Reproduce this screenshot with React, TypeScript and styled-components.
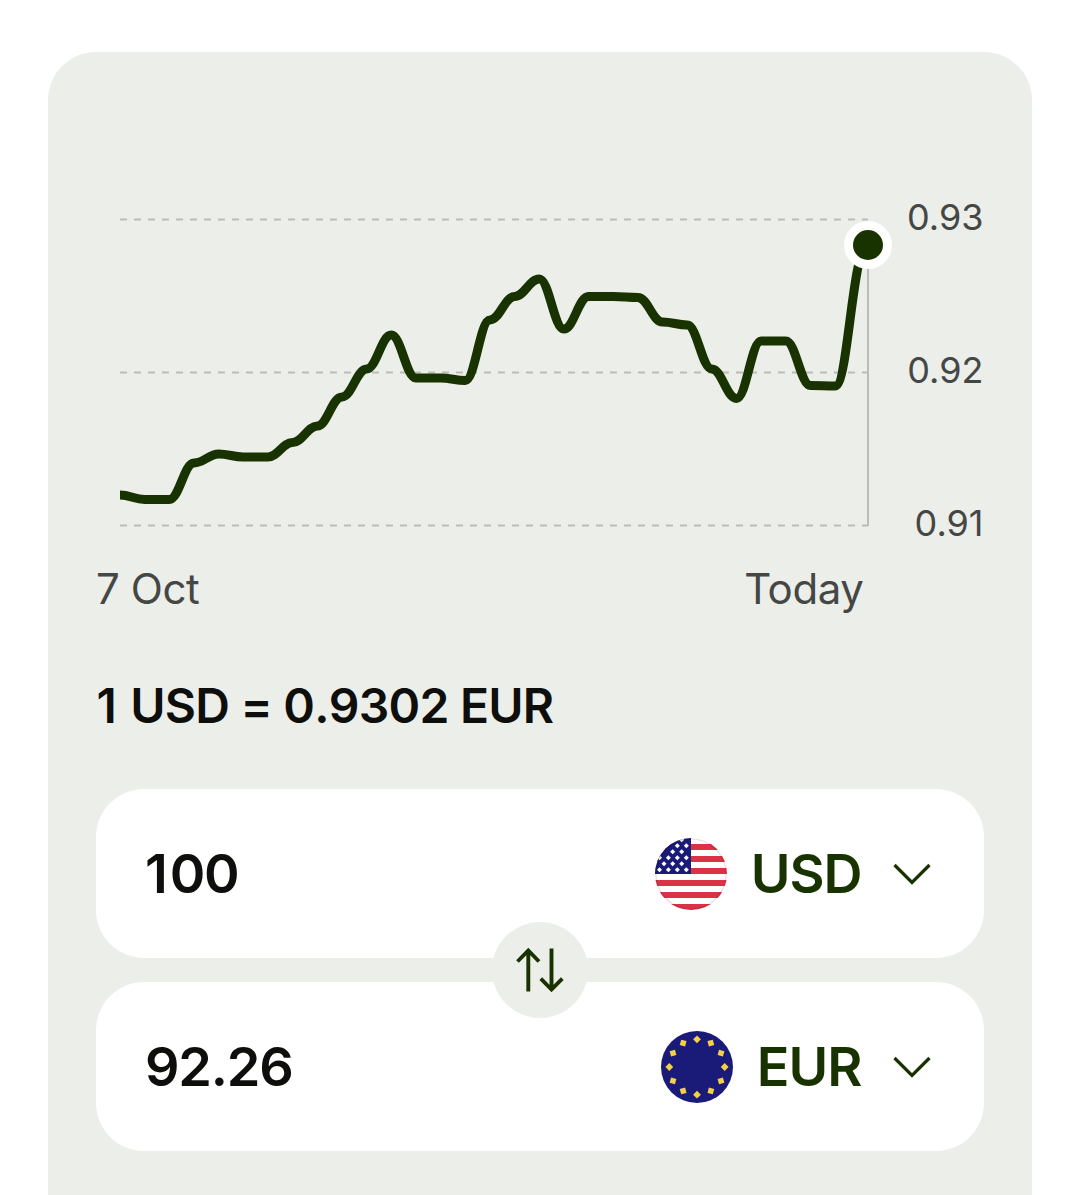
import React from "react";
import styled, { createGlobalStyle } from "styled-components";

const colors = {
  surface: "#eceee9",
  forest: "#193300",
  ink: "#0e0f0c",
  muted: "#454745",
  grid: "#babcb8",
};

const GlobalStyle = createGlobalStyle`
  *, *::before, *::after { box-sizing: border-box; }
  html, body { margin: 0; background: #ffffff; overflow: hidden; }
  body { font-family: Inter, "Liberation Sans", sans-serif; }
`;

const Page = styled.main`
  height: 1195px;
  padding: 52px 48px 0;
  overflow: hidden;
`;

const Card = styled.section`
  display: flex;
  flex-direction: column;
  height: 1200px;
  padding: 143px 48px 0;
  border-radius: 48px;
  background: ${colors.surface};
`;

const ChartRow = styled.div`
  display: flex;
  justify-content: space-between;
  height: 354px;
  padding-left: 24px;
`;

const ChartSvg = styled.svg`
  display: block;
  width: 780px;
  height: 354px;
`;

const Scale = styled.div`
  display: flex;
  flex-direction: column;
  gap: 109px;
`;

const ScaleLabel = styled.span`
  font-size: 36px;
  line-height: 44px;
  letter-spacing: 0;
  padding-right: 0.5px;
  text-align: right;
  color: ${colors.muted};
`;

const DateRow = styled.div`
  display: flex;
  justify-content: space-between;
  margin-top: 11px;
  padding-right: 120.5px;
  font-size: 42px;
  line-height: 58px;
  letter-spacing: -0.4px;
  color: ${colors.muted};
`;

const Rate = styled.h1`
  margin: 58px 0 0;
  padding-left: 0.5px;
  font-size: 48px;
  line-height: 60px;
  font-weight: 600;
  letter-spacing: -0.75px;
  font-kerning: none;
  color: ${colors.ink};

  &::first-letter {
    letter-spacing: 2px;
  }
`;

const Fields = styled.div`
  position: relative;
  display: flex;
  flex-direction: column;
  gap: 24px;
  margin-top: 53px;
`;

const Field = styled.div`
  display: flex;
  align-items: center;
  justify-content: space-between;
  height: 169px;
  padding: 0 53px 0 49px;
  border-radius: 48px;
  background: #ffffff;
`;

const Amount = styled.span<{ $lead: number }>`
  font-size: 54px;
  line-height: 72px;
  font-weight: 600;
  letter-spacing: -1.2px;
  font-kerning: none;
  color: ${colors.ink};

  &::first-letter {
    letter-spacing: ${({ $lead }) => $lead}px;
  }
`;

const Picker = styled.button`
  display: flex;
  align-items: center;
  padding: 0;
  border: 0;
  background: none;
  font: inherit;
  color: ${colors.forest};
`;

const Code = styled.span`
  margin: 0 31.5px 0 23.5px;
  font-size: 54px;
  line-height: 72px;
  font-weight: 600;
  letter-spacing: -1px;
`;

const Icon = styled.svg`
  display: block;
  flex: none;
`;

const SwapButton = styled.button`
  position: absolute;
  top: 50%;
  left: 50%;
  display: grid;
  place-items: center;
  width: 96px;
  height: 96px;
  padding: 0;
  border: 0;
  border-radius: 50%;
  background: ${colors.surface};
  transform: translate(-50%, -50%);
`;

const STEP = 24.66;
const series = [
  495, 499.5, 499.5, 463, 454, 457, 457, 442.5, 426, 397, 369, 335, 378, 378, 380.5,
  320, 296.5, 279, 329, 296.5, 296.5, 297.5, 322, 325, 369, 398.5, 341, 341, 385.5, 386,
].map((y, i): [number, number] => [i * STEP, y - 195]);
series.push([748, 50]);

const linePath = series.reduce((d, [x, y], i) => {
  if (i === 0) return `M${x} ${y}`;
  const [px, py] = series[i - 1];
  const pull = (x - px) * 0.4;
  return `${d}C${px + pull} ${py} ${x - pull * (i === series.length - 1 ? 1.2 : 1)} ${y} ${x} ${y}`;
}, "");

function RateChart() {
  return (
    <ChartSvg viewBox="0 0 780 354">
      {[24.5, 177.5, 330.5].map((y) => (
        <line key={y} x1="0" x2="748" y1={y} y2={y} stroke={colors.grid} strokeWidth="2" strokeDasharray="7 7" />
      ))}
      <line x1="748" x2="748" y1="50" y2="331" stroke={colors.grid} strokeWidth="2" />
      <path d={linePath} fill="none" stroke={colors.forest} strokeWidth="9" strokeLinejoin="round" />
      <circle cx="748" cy="50" r="24" fill="#fff" />
      <circle cx="748" cy="50" r="15" fill={colors.forest} />
    </ChartSvg>
  );
}

const starRows = [
  { y: 1.7, xs: [26.7] },
  { y: 7.7, xs: [22.3, 31.3] },
  { y: 13.7, xs: [17.7, 26.7] },
  { y: 19.7, xs: [4.5, 13.4, 22.3, 31.3] },
  { y: 25.7, xs: [9, 17.7, 26.7] },
  { y: 31.7, xs: [4.5, 13.4, 22.3, 31.3] },
];

function FlagUS() {
  return (
    <Icon width="72" height="72" viewBox="0 0 72 72">
      <clipPath id="us-round">
        <circle cx="36" cy="36" r="36" />
      </clipPath>
      <g clipPath="url(#us-round)">
        <rect width="72" height="72" fill="#fff" />
        {[6, 18, 30, 42, 54, 66].map((y) => (
          <rect key={y} y={y} width="72" height="6" fill="#db3248" />
        ))}
        <rect width="36" height="36" fill="#1a1a79" />
        {starRows.map(({ y, xs }) =>
          xs.map((x) => (
            <path key={`${x}-${y}`} d={`M${x} ${y - 2.5}l2.5 2.5-2.5 2.5-2.5-2.5z`} fill="#fff" />
          )),
        )}
        <circle cx="36" cy="36" r="35.2" fill="none" stroke="#000" strokeOpacity=".1" strokeWidth="1.6" />
      </g>
    </Icon>
  );
}

function FlagEU() {
  return (
    <Icon width="72" height="72" viewBox="0 0 72 72">
      <circle cx="36" cy="36" r="36" fill="#1a1a79" />
      {Array.from({ length: 12 }, (_, i) => (
        <path key={i} d="M36 4.4l3.900 3.900-3.900 3.900-3.900-3.900z" fill="#f3d147" transform={`rotate(${i * 30} 36 36)`} />
      ))}
    </Icon>
  );
}

function Chevron() {
  return (
    <Icon width="38" height="24" viewBox="0 0 38 24">
      <path d="M1.5 3L19 20.5 36.5 3" fill="none" stroke={colors.forest} strokeWidth="3.2" />
    </Icon>
  );
}

function SwapArrows() {
  return (
    <Icon width="48" height="48" viewBox="0 0 48 48" fill="none" stroke={colors.forest} strokeWidth="3.9">
      <path d="M12.3 45.6V4.5M1.5 15.5L12.3 4.5 23 15.5" />
      <path d="M35.5 2.6V43.5M24.8 32.6L35.5 43.5 46.3 32.6" />
    </Icon>
  );
}

interface CurrencyFieldProps {
  amount: string;
  code: string;
  flag: React.ReactNode;
}

function CurrencyField({ amount, code, flag }: CurrencyFieldProps) {
  return (
    <Field>
      <Amount $lead={amount.startsWith("1") ? 1.8 : -1.2}>{amount}</Amount>
      <Picker>
        {flag}
        <Code>{code}</Code>
        <Chevron />
      </Picker>
    </Field>
  );
}

export default function App() {
  return (
    <Page>
      <GlobalStyle />
      <Card>
        <ChartRow>
          <RateChart />
          <Scale>
            <ScaleLabel>0.93</ScaleLabel>
            <ScaleLabel>0.92</ScaleLabel>
            <ScaleLabel>0.91</ScaleLabel>
          </Scale>
        </ChartRow>
        <DateRow>
          <span>7 Oct</span>
          <span>Today</span>
        </DateRow>
        <Rate>1 USD = 0.9302 EUR</Rate>
        <Fields>
          <CurrencyField amount="100" code="USD" flag={<FlagUS />} />
          <CurrencyField amount="92.26" code="EUR" flag={<FlagEU />} />
          <SwapButton aria-label="Swap currencies">
            <SwapArrows />
          </SwapButton>
        </Fields>
      </Card>
    </Page>
  );
}
